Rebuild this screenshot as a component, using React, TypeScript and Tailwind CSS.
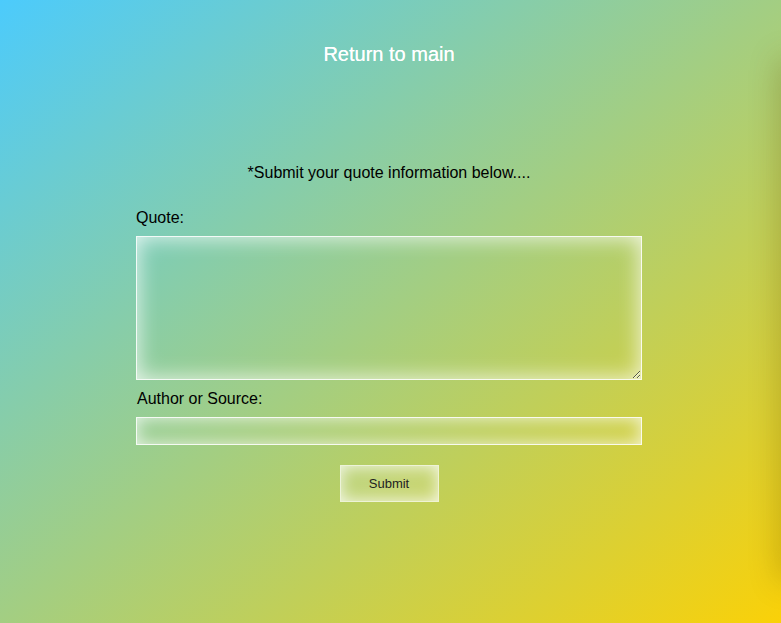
export default function App() {
  return (
    <div className="relative h-[623px] w-full overflow-hidden bg-[linear-gradient(to_bottom_right,#4ccbfc,#fad108)] pr-[3px] font-['Liberation_Sans',Arial,sans-serif]">
      <div className="absolute right-[-20px] top-[60px] h-[520px] w-[20px] shadow-[0_0_30px_rgba(90,70,0,0.35)]" />
      <div className="pt-[39px] text-center">
        <a href="#" className="text-[20px] text-white [text-shadow:0_0_0.4px_#fff]">Return to main</a>
      </div>
      <p className="mt-[92px] text-center text-[16px] text-black">*Submit your quote information below....</p>
      <form className="mx-auto mt-[21px] flex w-[506px] flex-col" onSubmit={(e) => e.preventDefault()}>
        <label className="text-[16px] text-black">Quote:</label>
        <textarea className="mt-[6px] h-[144px] w-full resize-y border border-white/90 bg-transparent shadow-[inset_0_0_22px_rgba(255,255,255,0.85)] outline-none" />
        <label className="mt-[7px] pl-[1px] text-[16px] text-black">Author or Source:</label>
        <input type="text" className="mt-[6px] h-[28px] w-full border border-white/90 bg-transparent shadow-[inset_0_0_18px_rgba(255,255,255,0.8)] outline-none" />
        <div className="mt-[20px] flex justify-center">
          <button type="submit" className="h-[37px] w-[99px] border border-white/70 bg-white/15 text-[13px] text-[#222] shadow-[inset_0_0_16px_rgba(255,255,255,0.85)]">Submit</button>
        </div>
      </form>
    </div>
  );
}
